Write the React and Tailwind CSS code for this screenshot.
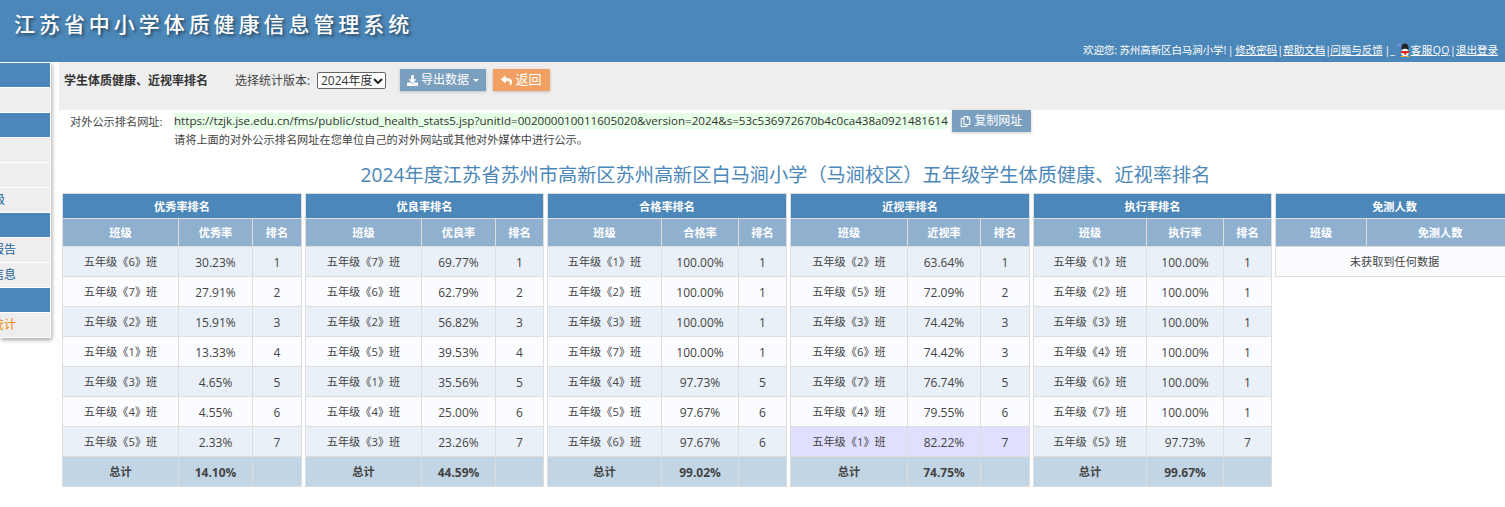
import React from 'react'
import { FaDownload, FaReply, FaRegCopy } from 'react-icons/fa'

const FONT = 'font-["Open_Sans","Noto_Sans_CJK_SC",sans-serif]'

const SIDE_ITEMS = [
  { type: 'head' },
  { type: 'item', text: '' },
  { type: 'head' },
  { type: 'item', text: '' },
  { type: 'item', text: '' },
  { type: 'item', text: '班级', pad: 'pr-[45px]' },
  { type: 'head' },
  { type: 'item', text: '学生报告', pad: 'pr-[34px]' },
  { type: 'item', text: '学生信息', pad: 'pr-[34px]' },
  { type: 'head' },
  { type: 'item', text: '排名统计', pad: 'pr-[34px]', active: true },
]

const TABLES = [
  {
    title: '优秀率排名', label: '优秀率', width: 'w-[239px]', total: '14.10%',
    cols: ['w-[116px]', 'w-[74px]', 'w-[49px]'],
    rows: [[6, '30.23%', 1], [7, '27.91%', 2], [2, '15.91%', 3], [1, '13.33%', 4], [3, '4.65%', 5], [4, '4.55%', 6], [5, '2.33%', 7]],
  },
  {
    title: '优良率排名', label: '优良率', width: 'w-[238px]', total: '44.59%',
    cols: ['w-[116px]', 'w-[74px]', 'w-[48px]'],
    rows: [[7, '69.77%', 1], [6, '62.79%', 2], [2, '56.82%', 3], [5, '39.53%', 4], [1, '35.56%', 5], [4, '25.00%', 6], [3, '23.26%', 7]],
  },
  {
    title: '合格率排名', label: '合格率', width: 'w-[239px]', total: '99.02%',
    cols: ['w-[114px]', 'w-[77px]', 'w-[48px]'],
    rows: [[1, '100.00%', 1], [2, '100.00%', 1], [3, '100.00%', 1], [7, '100.00%', 1], [4, '97.73%', 5], [5, '97.67%', 6], [6, '97.67%', 6]],
  },
  {
    title: '近视率排名', label: '近视率', width: 'w-[239px]', total: '74.75%', warnLast: true,
    cols: ['w-[117px]', 'w-[73px]', 'w-[49px]'],
    rows: [[2, '63.64%', 1], [5, '72.09%', 2], [3, '74.42%', 3], [6, '74.42%', 3], [7, '76.74%', 5], [4, '79.55%', 6], [1, '82.22%', 7]],
  },
  {
    title: '执行率排名', label: '执行率', width: 'w-[238px]', total: '99.67%',
    cols: ['w-[113px]', 'w-[77px]', 'w-[48px]'],
    rows: [[1, '100.00%', 1], [2, '100.00%', 1], [3, '100.00%', 1], [4, '100.00%', 1], [6, '100.00%', 1], [7, '100.00%', 1], [5, '97.73%', 7]],
  },
]

const cell = 'border border-[#ddd] text-center p-0 pt-[2px]'

function QQIcon() {
  return (
    <svg width="14" height="15" viewBox="0 0 14 15" className="-mt-[6px] shrink-0">
      <circle cx="2" cy="2" r="2" fill="#6f8fd8" />
      <ellipse cx="8" cy="5" rx="3.5" ry="4.5" fill="#222" />
      <ellipse cx="8" cy="9.5" rx="3.8" ry="3.8" fill="#fff" />
      <path d="M4 8h8v2l-3 .5V12H7.5v-1.5L4 10z" fill="#e2231a" />
      <path d="M4 13h3.5v1h-4zM8.5 13H12l.5 1h-4z" fill="#f5a623" />
    </svg>
  )
}

function RankTable({ table }) {
  return (
    <table className={`${table.width} shrink-0 table-fixed border-collapse text-[11.2px] text-[#444]`}>
      <colgroup>
        {table.cols.map(c => <col key={c} className={c} />)}
      </colgroup>
      <thead>
        <tr className="h-[25px] bg-[#4b87b8] text-white">
          <th colSpan={3} className={`${cell} font-bold`}>{table.title}</th>
        </tr>
        <tr className="h-[28px] bg-[#8fb0cf] text-white">
          <th className={`${cell} font-bold`}>班级</th>
          <th className={`${cell} font-bold`}>{table.label}</th>
          <th className={`${cell} font-bold`}>排名</th>
        </tr>
      </thead>
      <tbody>
        {table.rows.map(([cls, rate, rank], i) => {
          let bg = i % 2 === 0 ? 'bg-[#e9f0f7]' : 'bg-[#fbfcff]'
          if (table.warnLast && i === table.rows.length - 1) bg = 'bg-[#e0dfff]'
          return (
            <tr key={cls} className={`h-[30px] ${bg}`}>
              <td className={cell}>五年级《{cls}》班</td>
              <td className={`${cell} text-[12px]`}>{rate}</td>
              <td className={`${cell} text-[12px]`}>{rank}</td>
            </tr>
          )
        })}
        <tr className="h-[30px] bg-[#c2d5e4] font-bold">
          <td className={cell}>总计</td>
          <td className={`${cell} text-[12px]`}>{table.total}</td>
          <td className={cell}></td>
        </tr>
      </tbody>
    </table>
  )
}

function ExemptTable() {
  return (
    <table className="w-[238px] shrink-0 self-start table-fixed border-collapse text-[11.2px] text-[#444]">
      <colgroup>
        <col className="w-[91px]" />
        <col className="w-[147px]" />
      </colgroup>
      <thead>
        <tr className="h-[25px] bg-[#4b87b8] text-white">
          <th colSpan={2} className={`${cell} font-bold`}>免测人数</th>
        </tr>
        <tr className="h-[28px] bg-[#8fb0cf] text-white">
          <th className={`${cell} font-bold`}>班级</th>
          <th className={`${cell} font-bold`}>免测人数</th>
        </tr>
      </thead>
      <tbody>
        <tr className="h-[30px] bg-[#fbfcff]">
          <td colSpan={2} className={cell}>未获取到任何数据</td>
        </tr>
      </tbody>
    </table>
  )
}

export default function App() {
  return (
    <div className={`w-[1505px] h-[507px] overflow-hidden bg-white ${FONT}`}>
      {/* Header */}
      <div className="relative h-[62px] bg-[#4b87b8] text-white">
        <div className="pl-[14px] pt-[11px] text-[21px] leading-[27px] font-medium tracking-[3.95px] [text-shadow:2px_2px_3px_rgba(0,0,0,0.45)]">
          江苏省中小学体质健康信息管理系统
        </div>
        <div className="absolute right-[7px] bottom-[4px] flex items-end text-[10.5px] leading-[16px] whitespace-pre">
          <span className="tracking-[-0.1px]">欢迎您: 苏州高新区白马涧小学!</span>
          <span className="w-[9px] text-center">|</span>
          <span className="underline">修改密码</span>
          <span className="w-[6px] text-center">|</span>
          <span className="underline">帮助文档</span>
          <span className="w-[5px] text-center">|</span>
          <span className="underline">问题与反馈</span>
          <span className="w-[14px] text-center">|_</span>
          <QQIcon />
          <span className="underline tracking-[0.5px]">客服QQ</span>
          <span className="w-[6px] text-center">|</span>
          <span className="underline">退出登录</span>
        </div>
      </div>

      <div className="flex items-start">
        {/* Sidebar, mostly scrolled off to the left */}
        <div className="w-[51px] shrink-0 pt-px bg-white shadow-[1px_2px_4px_rgba(0,0,0,0.35)] overflow-hidden">
          {SIDE_ITEMS.map((item, i) => (
            <div
              key={i}
              className={`h-[24px] mb-px flex items-center justify-end mr-px text-[12px] whitespace-nowrap ${item.pad || ''} ${
                item.type === 'head' ? 'bg-[#4b87b8]' : 'bg-[#eee]'
              } ${item.active ? 'text-[#f08a0c]' : 'text-[#2a6496]'}`}
            >
              {item.text}
            </div>
          ))}
        </div>

        <div className="ml-[8px] w-[1453px] shrink-0">
          {/* Toolbar */}
          <div className="h-[48px] bg-[#eee] flex items-start pt-[7px] pl-[5px] text-[12px] text-[#444]">
            <span className="mt-[3px] w-[171px] font-bold text-[#333]">学生体质健康、近视率排名</span>
            <span className="mt-[3px] w-[82px]">选择统计版本:</span>
            <div className="relative mt-[3px] w-[69px] h-[17px]">
              <select defaultValue="2024" className="appearance-none w-full h-full pl-[3px] bg-white border border-[#666] rounded-[2px] text-[12px] leading-[15px] text-[#333]">
                <option value="2024">2024年度</option>
              </select>
              <svg width="10" height="6" viewBox="0 0 10 6" className="absolute right-[3px] top-[6px] pointer-events-none">
                <path d="M1 1l4 4 4-4" fill="none" stroke="#222" strokeWidth="2" />
              </svg>
            </div>
            <button className="ml-[14px] w-[86px] h-[22px] flex items-center justify-center gap-[3px] bg-[#7a9fbf] text-white shadow-[0_1px_3px_rgba(0,0,0,0.2)]">
              <FaDownload className="text-[11px]" />
              导出数据
              <span className="ml-px border-x-[3px] border-x-transparent border-t-[3px] border-t-white" />
            </button>
            <button className="ml-[7px] w-[57px] h-[22px] flex items-center justify-center gap-[3px] bg-[#efa062] text-white text-[13px] shadow-[0_1px_3px_rgba(0,0,0,0.2)]">
              <FaReply className="text-[11px]" />
              返回
            </button>
          </div>

          {/* Public URL */}
          <div className="flex text-[11.2px] text-[#444]">
            <div className="w-[115px] shrink-0 pl-[11px] pt-[3px] leading-[17px]">对外公示排名网址:</div>
            <div>
              <div className="flex items-start">
                <span className="mt-[3px] h-[16px] leading-[16px] bg-[#e6ffe6] text-[11.6px] text-[#333] whitespace-nowrap">
                  https://tzjk.jse.edu.cn/fms/public/stud_health_stats5.jsp?unitId=002000010011605020&version=2024&s=53c536972670b4c0ca438a0921481614
                </span>
                <button className="ml-[4px] w-[79px] h-[22px] flex items-center justify-center gap-[3px] bg-[#7a9fbf] text-white text-[12px] shadow-[0_1px_3px_rgba(0,0,0,0.2)]">
                  <FaRegCopy className="text-[11px]" />
                  复制网址
                </button>
              </div>
              <div className="mt-[-1px] leading-[17px]">请将上面的对外公示排名网址在您单位自己的对外网站或其他对外媒体中进行公示。</div>
            </div>
          </div>

          <div className="mt-[13px] h-[28px] leading-[28px] text-center text-[19.2px] text-[#4b87b8]">
            2024年度江苏省苏州市高新区苏州高新区白马涧小学（马涧校区）五年级学生体质健康、近视率排名
          </div>

          {/* Ranking tables */}
          <div className="mt-[4px] pl-[3px] flex items-start gap-[3px]">
            {TABLES.map(t => <RankTable key={t.title} table={t} />)}
            <ExemptTable />
          </div>
        </div>
      </div>
    </div>
  )
}
